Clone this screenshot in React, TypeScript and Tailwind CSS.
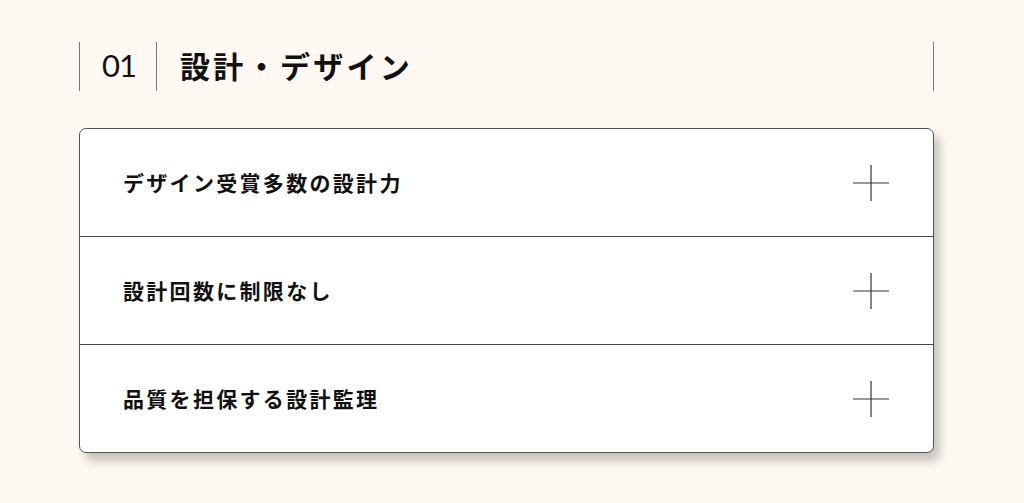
import React from "react";

const items = ["デザイン受賞多数の設計力", "設計回数に制限なし", "品質を担保する設計監理"];

function Plus() {
  return (
    <svg width="36" height="36" viewBox="0 0 36 36" className="shrink-0">
      <line x1="0" y1="18" x2="36" y2="18" stroke="#333" strokeWidth="1.2" />
      <line x1="18" y1="0" x2="18" y2="36" stroke="#333" strokeWidth="1.2" />
    </svg>
  );
}

export default function App() {
  return (
    <div
      className="w-[1024px] h-[503px] bg-[#fdf8f1] pt-[42px] pl-[79px]"
      style={{ fontFamily: '"Noto Sans CJK JP", "Noto Sans", sans-serif' }}
    >
      <div className="w-[855px] h-[49px] flex items-center border-l border-r border-[#777]">
        <div
          className="w-[77px] h-full flex items-center border-r border-[#777] pl-[22px] pb-[2px] text-[31px] text-[#111] tracking-[-0.03em]"
          style={{ fontFamily: '"Lato", "Noto Sans", sans-serif' }}
        >
          01
        </div>
        <div className="pl-[23px] pb-[4px] text-[30px] font-bold text-[#111] tracking-[0.11em] leading-none">
          設計・デザイン
        </div>
      </div>
      <div className="mt-[37px] w-[855px] bg-white border border-[#555] rounded-[7px] shadow-[6px_8px_10px_rgba(0,0,0,0.22)] overflow-hidden">
        {items.map((t, i) => (
          <div
            key={t}
            className={`flex items-center justify-between pl-[43px] pr-[44px] ${i > 0 ? "h-[108px] border-t border-[#444]" : "h-[107px]"}`}
          >
            <span className="text-[21px] font-bold text-[#111] tracking-[0.11em]">{t}</span>
            <Plus />
          </div>
        ))}
      </div>
    </div>
  );
}
